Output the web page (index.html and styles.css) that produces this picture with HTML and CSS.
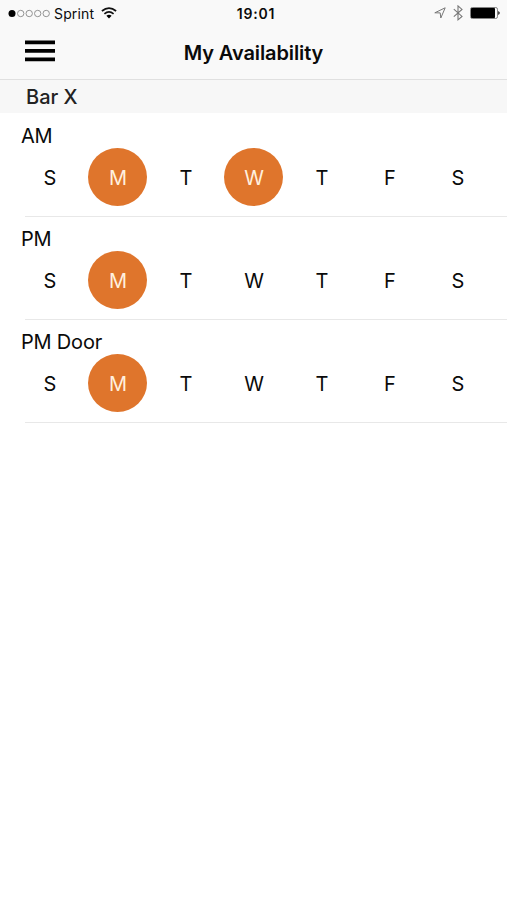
FILE: index.html
```html
<!DOCTYPE html>
<html lang="en">
<head>
<meta charset="utf-8">
<title>My Availability</title>
<link rel="stylesheet" href="styles.css">
</head>
<body>
<header class="top">
  <div class="status">
    <div class="carrier">
      <svg width="42" height="10" viewBox="0 0 42 10"><circle cx="4" cy="4.5" r="3.5"/><g fill="none" stroke="#888" stroke-width=".9"><circle cx="12.7" cy="4.5" r="3.2"/><circle cx="21.2" cy="4.5" r="3.2"/><circle cx="29.7" cy="4.5" r="3.2"/><circle cx="38.2" cy="4.5" r="3.2"/></g></svg>
      <span class="name">Sprint</span>
      <svg class="wifi" width="16" height="12" viewBox="0 0 16 12"><g fill="none" stroke="#111" stroke-width="1.7"><path d="M.9 4Q8-1.8 15.1 4"/><path d="M3.4 6.8Q8 3 12.6 6.8"/></g><path d="M5.4 8.8Q8 6.8 10.6 8.8L8 11.4z"/></svg>
    </div>
    <div class="clock">19:01</div>
    <div class="indicators">
      <svg width="12" height="12" viewBox="0 0 12 12"><path d="M.8 5.8L11.2.8 6.8 11 6.2 5.9z" fill="none" stroke="#777" stroke-width="1"/></svg>
      <svg width="10" height="16" viewBox="0 0 10 16"><path d="M.8 4.2L9 11.4 5 14.8V.9L9 4.4.8 11.6" fill="none" stroke="#777" stroke-width="1.1"/></svg>
      <svg width="30" height="12" viewBox="0 0 30 12"><rect x=".5" y=".5" width="27" height="11" rx="1.8" fill="none" stroke="#666" stroke-width=".8"/><rect x="1" y="1" width="24" height="10" rx=".8"/><path d="M28.3 4q2.8 2 0 4z"/></svg>
    </div>
  </div>
  <nav class="nav">
    <svg class="menu" width="30" height="22" viewBox="0 0 30 22"><path d="M0 2.3H30M0 10.8H30M0 19.3H30" stroke="#000" stroke-width="3.8"/></svg>
    <h1>My Availability</h1>
    <span></span>
  </nav>
</header>
<h2 class="venue">Bar X</h2>
<main>
  <section class="shift"><h3>AM</h3><div class="days"><span>S</span><span class="on">M</span><span>T</span><span class="on">W</span><span>T</span><span>F</span><span>S</span></div></section>
  <section class="shift"><h3>PM</h3><div class="days"><span>S</span><span class="on">M</span><span>T</span><span>W</span><span>T</span><span>F</span><span>S</span></div></section>
  <section class="shift"><h3>PM Door</h3><div class="days"><span>S</span><span class="on">M</span><span>T</span><span>W</span><span>T</span><span>F</span><span>S</span></div></section>
</main>
</body>
</html>
```
FILE: styles.css
```css
* { box-sizing: border-box; }
body { margin: 0; background: #fff; color: #0a0a0a; font-family: Inter, "Liberation Sans", sans-serif; }
svg { display: block; flex: none; }
h1, h2, h3 { margin: 0; }
.top { height: 80px; background: #f9f9f9; border-bottom: 1px solid #e0e0e0; }
.status { height: 27px; display: grid; grid-template-columns: 1fr auto 1fr; align-items: center; padding: 0 7px 0 8px; }
.carrier, .indicators { display: flex; align-items: center; }
.name { font-size: 14px; line-height: 20px; margin-left: 4px; letter-spacing: .15px; }
.wifi { margin: -2px 0 0 7px; }
.clock { font-size: 14px; font-weight: 600; line-height: 20px; letter-spacing: .8px; padding-left: 4px; }
.indicators { justify-content: flex-end; gap: 7px; margin-top: -1px; }
.nav { height: 50px; display: grid; grid-template-columns: 1fr auto 1fr; align-items: center; padding: 0 25px; }
.nav .menu { margin-top: -3px; }
.nav h1 { font-size: 20px; font-weight: 600; line-height: 26px; letter-spacing: -.1px; padding-top: 1px; }
.venue { height: 33px; padding-left: 26px; background: #f7f7f7; font-size: 20px; font-weight: 500; line-height: 35px; color: #222; }
.shift { height: 103px; padding: 9px 15px 0 15.5px; background: linear-gradient(#e8e8e8, #e8e8e8) 25px 100% / 100% 1px no-repeat; }
.shift:first-child { height: 104px; padding-top: 10px; }
.shift h3 { height: 25px; padding-left: 5.5px; font-size: 20px; font-weight: 400; line-height: 27px; letter-spacing: -.2px; }
.days { display: grid; grid-template-columns: repeat(7, 68px); justify-items: center; }
.days span { width: 59px; height: 58px; padding-left: 1px; border-radius: 50%; text-align: center; font-size: 20px; line-height: 60px; }
.days .on { background: #df752c; color: #fff0df; }
```
